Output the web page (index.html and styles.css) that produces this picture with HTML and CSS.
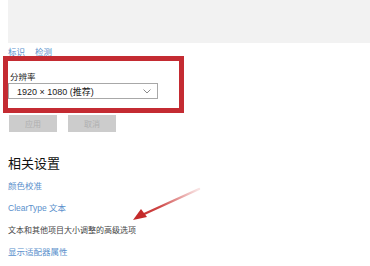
FILE: index.html
```html
<!DOCTYPE html>
<html lang="zh">
<head>
<meta charset="utf-8">
<link rel="stylesheet" href="styles.css">
</head>
<body>
<div class="page">
  <div class="preview"></div>
  <div class="links">
    <span class="link">标识</span>
    <span class="link">检测</span>
  </div>
  <div class="redbox">
    <div class="label">分辨率</div>
    <div class="select">
      <span>1920 × 1080 (推荐)</span>
      <svg class="chev" width="8" height="5" viewBox="0 0 8 5"><path d="M0.5 0.5 L4 4 L7.5 0.5" fill="none" stroke="#8a8a8a" stroke-width="1"/></svg>
    </div>
  </div>
  <div class="buttons">
    <div class="btn">应用</div>
    <div class="btn">取消</div>
  </div>
  <h2 class="heading">相关设置</h2>
  <div class="item link">颜色校准</div>
  <div class="item link">ClearType 文本</div>
  <div class="item text">文本和其他项目大小调整的高级选项</div>
  <div class="item link">显示适配器属性</div>
  <svg class="arrow" width="370" height="266" viewBox="0 0 370 266">
    <defs>
      <linearGradient id="g" x1="198" y1="190" x2="133" y2="220" gradientUnits="userSpaceOnUse">
        <stop offset="0" stop-color="#d04040" stop-opacity="0.15"/>
        <stop offset="0.6" stop-color="#c8302f" stop-opacity="0.9"/>
        <stop offset="1" stop-color="#c42a2a"/>
      </linearGradient>
    </defs>
    <path d="M199 189 L142 215" stroke="url(#g)" stroke-width="2.4" stroke-linecap="round"/>
    <path d="M133 220 L141 209 L147 217 Z" fill="#c42a2a"/>
  </svg>
</div>
</body>
</html>
```

FILE: styles.css
```css
html, body {
  margin: 0;
  padding: 0;
  background: #ffffff;
}
.page {
  position: relative;
  width: 370px;
  height: 266px;
  overflow: hidden;
  font-family: "Noto Sans CJK SC", "Liberation Sans", sans-serif;
}
.preview {
  margin-left: 8px;
  height: 43px;
  background: #f2f2f2;
}
.links {
  display: flex;
  gap: 10px;
  padding-left: 8px;
  padding-top: 3px;
  height: 10px;
  font-size: 8.5px;
  line-height: 10px;
}
.link {
  color: #5a90cc;
}
.redbox {
  box-sizing: border-box;
  margin-left: 3px;
  width: 181px;
  height: 57px;
  border: 5px solid #c42b32;
  padding: 9px 0 0 0;
}
.label {
  font-size: 8.5px;
  line-height: 12px;
  color: #222;
  padding-left: 2px;
}
.select {
  box-sizing: border-box;
  margin-top: 1px;
  width: 150px;
  height: 16px;
  border: 1px solid #a8a8a8;
  display: flex;
  align-items: center;
  justify-content: space-between;
  padding: 0 6px 0 8px;
  font-family: "Liberation Sans", "Noto Sans CJK SC", sans-serif;
  font-size: 9px;
  color: #222;
}
.chev {
  display: block;
}
.buttons {
  display: flex;
  gap: 11px;
  margin-left: 9px;
  margin-top: 2px;
}
.btn {
  width: 48px;
  height: 17px;
  background: #cccccc;
  color: #b0b0b0;
  font-size: 8px;
  line-height: 17px;
  text-align: center;
}
.heading {
  margin: 23px 0 0 8px;
  font-size: 13px;
  line-height: 16px;
  font-weight: normal;
  color: #111;
}
.item {
  margin-left: 8px;
  font-size: 8.5px;
  line-height: 12px;
  height: 12px;
  margin-bottom: 10px;
}
.heading + .item {
  margin-top: 9px;
}
.item.link {
  font-family: "Liberation Sans", "Noto Sans CJK SC", sans-serif;
}
.item.text {
  color: #444;
  font-size: 8px;
}
.arrow {
  position: absolute;
  left: 0;
  top: 0;
}
```
